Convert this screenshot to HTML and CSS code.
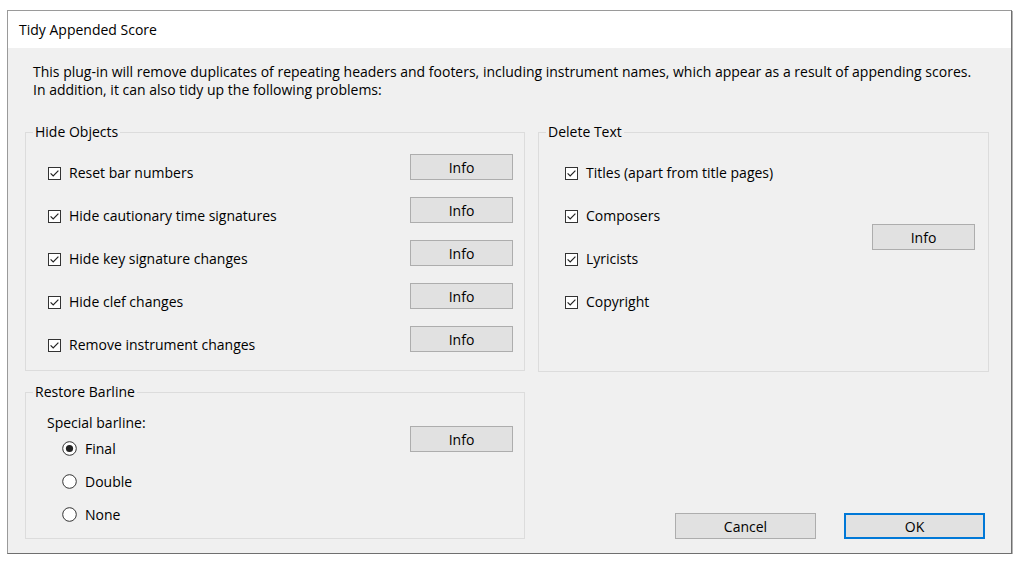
FILE: index.html
```html
<!DOCTYPE html>
<html lang="en">
<head>
  <meta charset="UTF-8">
  <title>Tidy Appended Score</title>
  <link rel="stylesheet" href="styles.css">
</head>
<body>
  <div class="dialog">
    <div class="titlebar">Tidy Appended Score</div>
    <div class="content">
      <p class="intro">This plug-in will remove duplicates of repeating headers and footers, including instrument names, which appear as a result of appending scores.<br>In addition, it can also tidy up the following problems:</p>

      <div class="groups">
        <fieldset class="group hide-objects">
          <legend>Hide Objects</legend>
          <div class="group-body">
            <div class="row">
              <label class="check"><svg width="13" height="13" viewBox="0 0 13 13"><rect x="0.5" y="0.5" width="12" height="12" fill="#fff" stroke="#333"/><path d="M2.6 6.4 L5.2 9 L10.4 3.6" fill="none" stroke="#222" stroke-width="1.2"/></svg>Reset bar numbers</label>
              <button class="btn">Info</button>
            </div>
            <div class="row">
              <label class="check"><svg width="13" height="13" viewBox="0 0 13 13"><rect x="0.5" y="0.5" width="12" height="12" fill="#fff" stroke="#333"/><path d="M2.6 6.4 L5.2 9 L10.4 3.6" fill="none" stroke="#222" stroke-width="1.2"/></svg>Hide cautionary time signatures</label>
              <button class="btn">Info</button>
            </div>
            <div class="row">
              <label class="check"><svg width="13" height="13" viewBox="0 0 13 13"><rect x="0.5" y="0.5" width="12" height="12" fill="#fff" stroke="#333"/><path d="M2.6 6.4 L5.2 9 L10.4 3.6" fill="none" stroke="#222" stroke-width="1.2"/></svg>Hide key signature changes</label>
              <button class="btn">Info</button>
            </div>
            <div class="row">
              <label class="check"><svg width="13" height="13" viewBox="0 0 13 13"><rect x="0.5" y="0.5" width="12" height="12" fill="#fff" stroke="#333"/><path d="M2.6 6.4 L5.2 9 L10.4 3.6" fill="none" stroke="#222" stroke-width="1.2"/></svg>Hide clef changes</label>
              <button class="btn">Info</button>
            </div>
            <div class="row">
              <label class="check"><svg width="13" height="13" viewBox="0 0 13 13"><rect x="0.5" y="0.5" width="12" height="12" fill="#fff" stroke="#333"/><path d="M2.6 6.4 L5.2 9 L10.4 3.6" fill="none" stroke="#222" stroke-width="1.2"/></svg>Remove instrument changes</label>
              <button class="btn">Info</button>
            </div>
          </div>
        </fieldset>

        <fieldset class="group delete-text">
          <legend>Delete Text</legend>
          <div class="group-body">
            <div class="text-list">
              <div class="row">
                <label class="check"><svg width="13" height="13" viewBox="0 0 13 13"><rect x="0.5" y="0.5" width="12" height="12" fill="#fff" stroke="#333"/><path d="M2.6 6.4 L5.2 9 L10.4 3.6" fill="none" stroke="#222" stroke-width="1.2"/></svg>Titles (apart from title pages)</label>
              </div>
              <div class="row">
                <label class="check"><svg width="13" height="13" viewBox="0 0 13 13"><rect x="0.5" y="0.5" width="12" height="12" fill="#fff" stroke="#333"/><path d="M2.6 6.4 L5.2 9 L10.4 3.6" fill="none" stroke="#222" stroke-width="1.2"/></svg>Composers</label>
              </div>
              <div class="row">
                <label class="check"><svg width="13" height="13" viewBox="0 0 13 13"><rect x="0.5" y="0.5" width="12" height="12" fill="#fff" stroke="#333"/><path d="M2.6 6.4 L5.2 9 L10.4 3.6" fill="none" stroke="#222" stroke-width="1.2"/></svg>Lyricists</label>
              </div>
              <div class="row">
                <label class="check"><svg width="13" height="13" viewBox="0 0 13 13"><rect x="0.5" y="0.5" width="12" height="12" fill="#fff" stroke="#333"/><path d="M2.6 6.4 L5.2 9 L10.4 3.6" fill="none" stroke="#222" stroke-width="1.2"/></svg>Copyright</label>
              </div>
            </div>
            <button class="btn text-info">Info</button>
          </div>
        </fieldset>

        <fieldset class="group restore">
          <legend>Restore Barline</legend>
          <div class="group-body">
            <div class="barline">
              <div class="barline-label">Special barline:</div>
              <label class="radio"><svg width="15" height="15" viewBox="0 0 15 15"><circle cx="7.5" cy="7.5" r="6.8" fill="#fff" stroke="#333"/><circle cx="7.5" cy="7.5" r="3.6" fill="#222"/></svg>Final</label>
              <label class="radio"><svg width="15" height="15" viewBox="0 0 15 15"><circle cx="7.5" cy="7.5" r="6.8" fill="#fff" stroke="#333"/></svg>Double</label>
              <label class="radio"><svg width="15" height="15" viewBox="0 0 15 15"><circle cx="7.5" cy="7.5" r="6.8" fill="#fff" stroke="#333"/></svg>None</label>
            </div>
            <button class="btn barline-info">Info</button>
          </div>
        </fieldset>

        <div class="actions">
          <button class="btn wide">Cancel</button>
          <button class="btn wide default">OK</button>
        </div>
      </div>
    </div>
  </div>
</body>
</html>
```

FILE: styles.css
```css
body {
  margin: 0;
  background-color: #ffffff;
  font-family: "Open Sans", "Noto Sans", sans-serif;
  font-size: 14px;
  color: #000;
}
.dialog {
  margin: 10px 0 0 7px;
  width: 1005px;
  height: 544px;
  box-sizing: border-box;
  border: 1px solid #9a9a9a;
  border-right-color: #6f6f6f;
  border-bottom-color: #6f6f6f;
  box-shadow: 1px 1px 0 #b4b4b4;
  background-color: #f0f0f0;
  display: flex;
  flex-direction: column;
}
.titlebar {
  height: 37px;
  line-height: 37px;
  padding-left: 11px;
  background-color: #fff;
}
.content {
  padding: 15px 0 0 17px;
}
.intro {
  margin: 0 0 24px 8px;
  line-height: 18px;
}
.groups {
  display: grid;
  grid-template-columns: 500px 451px;
  column-gap: 13px;
  row-gap: 11px;
}
.group {
  margin: 0;
  padding: 0 0 0 7px;
  border: 1px solid #dcdcdc;
  min-inline-size: 0;
  box-sizing: border-box;
}
.group legend {
  padding: 0 2px;
  line-height: 18px;
}
.hide-objects {
  height: 248px;
}
.hide-objects .group-body {
  padding: 13px 11px 0 15px;
}
.row {
  display: flex;
  justify-content: space-between;
  align-items: flex-start;
  height: 26px;
  margin-bottom: 17px;
}
.check, .radio {
  display: flex;
  align-items: center;
  gap: 8px;
  line-height: 18px;
}
.row .check {
  padding-top: 10px;
}
.btn {
  width: 103px;
  height: 26px;
  padding: 0;
  font-family: inherit;
  font-size: 14px;
  color: #000;
  background-color: #e1e1e1;
  border: 1px solid #adadad;
  border-radius: 0;
}
.delete-text {
  height: 249px;
}
.delete-text .group-body {
  padding: 13px 13px 0 19px;
  display: flex;
  align-items: flex-start;
  justify-content: space-between;
}
.text-info {
  margin-top: 70px;
}
.restore {
  height: 156px;
}
.restore .group-body {
  padding: 13px 11px 0 14px;
  display: flex;
  justify-content: space-between;
  align-items: flex-start;
}
.barline-label {
  line-height: 18px;
}
.barline .radio {
  height: 33px;
  margin-left: 15px;
}
.barline-info {
  margin-top: 12px;
}
.actions {
  display: flex;
  justify-content: flex-end;
  align-items: flex-end;
  gap: 28px;
  padding-right: 4px;
}
.wide {
  width: 141px;
}
.default {
  border: 2px solid #0078d7;
}
```
